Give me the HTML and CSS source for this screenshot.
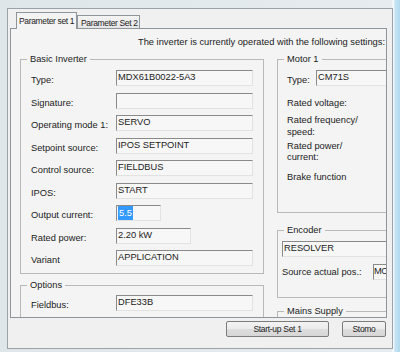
FILE: index.html
```html
<!DOCTYPE html>
<html>
  <head>
    <title>Parameter set</title>
    <link rel="stylesheet" href="styles.css">
  </head>
  <body>
    <div class="dialog">
      <div class="tabs">
        <div class="tab active">Parameter set 1</div>
        <div class="tab">Parameter Set 2</div>
      </div>
      <div class="panel">
        <p class="intro">The inverter is currently operated with the following settings:</p>
        <div class="cols">
          <div class="col-left">
            <fieldset class="group">
              <legend>Basic Inverter</legend>
              <div class="inner basic">
                <div class="row"><span class="lbl">Type:</span><span class="box">MDX61B0022-5A3</span></div>
                <div class="row"><span class="lbl">Signature:</span><span class="box"></span></div>
                <div class="row"><span class="lbl">Operating mode 1:</span><span class="box">SERVO</span></div>
                <div class="row"><span class="lbl">Setpoint source:</span><span class="box">IPOS SETPOINT</span></div>
                <div class="row"><span class="lbl">Control source:</span><span class="box">FIELDBUS</span></div>
                <div class="row"><span class="lbl">IPOS:</span><span class="box">START</span></div>
                <div class="row"><span class="lbl">Output current:</span><span class="box short"><span class="sel">5.5</span></span></div>
                <div class="row"><span class="lbl">Rated power:</span><span class="box mid">2.20 kW</span></div>
                <div class="row"><span class="lbl">Variant</span><span class="box">APPLICATION</span></div>
              </div>
            </fieldset>
            <fieldset class="group options">
              <legend>Options</legend>
              <div class="inner opts">
                <div class="row"><span class="lbl">Fieldbus:</span><span class="box">DFE33B</span></div>
              </div>
            </fieldset>
          </div>
          <div class="col-right">
            <fieldset class="group">
              <legend>Motor 1</legend>
              <div class="inner motor">
                <div class="row"><span class="lbl lbl-type">Type:</span><span class="box wide">CM71S</span></div>
                <div class="mline voltage">Rated voltage:</div>
                <div class="mline freq">Rated frequency/<br>speed:</div>
                <div class="mline power">Rated power/<br>current:</div>
                <div class="mline brake">Brake function</div>
              </div>
            </fieldset>
            <fieldset class="group encoder">
              <legend>Encoder</legend>
              <div class="inner enc">
                <span class="box wide">RESOLVER</span>
                <div class="row src"><span class="lbl lbl-src">Source actual pos.:</span><span class="box tiny">MO</span></div>
              </div>
            </fieldset>
            <fieldset class="group mains">
              <legend>Mains Supply</legend>
              <div class="inner mains-in"></div>
            </fieldset>
          </div>
        </div>
      </div>
      <div class="buttons">
        <button class="btn startup">Start-up Set 1</button>
        <button class="btn stomo">Stomo</button>
      </div>
    </div>
  </body>
</html>
```

FILE: styles.css
```css
body {
	margin: 0;
	width: 400px;
	height: 352px;
	overflow: hidden;
	background: linear-gradient(to right, #dfe6ea 0, #e6ecef 392px, #ffffff 393px, #c6e5f5 395px, #b2d8ee 400px);
	font-family: "Liberation Sans", Arial, sans-serif;
	font-size: 9.3px;
	color: #222;
}
.dialog {
	box-sizing: border-box;
	width: 386px;
	height: 341px;
	margin: 8px 0 0 7px;
	padding: 0 5px 0 2px;
	border: 1px solid #9aa3a9;
	background: #f0f0f0;
}
.tabs {
	display: flex;
	align-items: flex-end;
	height: 19px;
	padding-left: 6px;
}
.tab {
	box-sizing: border-box;
	height: 13px;
	width: 63px;
	padding: 1px 0 0 3px;
	border: 1px solid #8e959b;
	border-bottom: none;
	background: linear-gradient(#f4f4f4, #e6e6e6);
	font-size: 8.5px;
	letter-spacing: -0.35px;
	line-height: 12px;
	white-space: nowrap;
}
.tab.active {
	position: relative;
	z-index: 1;
	height: 17px;
	width: 61px;
	margin-bottom: -1px;
	padding: 2px 0 0 2px;
	background: #f4f4f4;
}
.panel {
	box-sizing: border-box;
	height: 290px;
	border: 1px solid #8e959b;
	background: #f4f4f4;
	overflow: hidden;
}
.intro {
	margin: 7px 0 0;
	padding-right: 1px;
	text-align: right;
	line-height: 12px;
	white-space: nowrap;
}
.cols {
	display: flex;
	margin-top: 5px;
	padding-left: 9px;
}
.col-left {
	width: 244px;
	flex-shrink: 0;
}
.col-right {
	width: 130px;
	margin-left: 13px;
	flex-shrink: 0;
}
.group {
	margin: 0;
	padding: 0;
	min-width: 0;
	border: 1px solid #b9b9b9;
}
.group legend {
	margin-left: 6px;
	padding: 0 3px;
	line-height: 12px;
}
.inner.basic {
	padding: 5px 0 7px 10px;
}
.options {
	margin-top: 5px;
}
.inner.opts {
	padding: 4px 0 20px 10px;
}
.row {
	display: flex;
	height: 16px;
	margin-bottom: 6.5px;
}
.row:last-child {
	margin-bottom: 0;
}
.lbl {
	width: 85px;
	flex-shrink: 0;
	padding-top: 4px;
	line-height: 12px;
	white-space: nowrap;
}
.box {
	display: block;
	box-sizing: border-box;
	width: 137px;
	height: 16px;
	padding: 0 1px;
	border: 1px solid;
	border-color: #8a8a8a #e2e2e2 #e2e2e2 #8a8a8a;
	background: #f7f7f7;
	line-height: 12px;
	white-space: nowrap;
	overflow: hidden;
	flex-shrink: 0;
}
.box.short {
	width: 45px;
}
.box.mid {
	width: 75px;
}
.box.wide {
	width: 110px;
}
.box.tiny {
	width: 14px;
	padding: 0;
	letter-spacing: -0.5px;
}
.sel {
	display: inline-block;
	height: 14px;
	padding: 0 1px;
	background: #3399ff;
	color: #fff;
	line-height: 14px;
}
.inner.motor {
	box-sizing: border-box;
	height: 147px;
	padding: 5px 0 0 9px;
}
.lbl-type {
	width: 29px;
}
.mline {
	line-height: 12px;
	white-space: nowrap;
}
.voltage {
	margin-top: 11px;
}
.freq {
	margin-top: 5px;
}
.power {
	margin-top: 3px;
	line-height: 11px;
}
.brake {
	margin-top: 8px;
}
.encoder {
	margin-top: 11px;
}
.inner.enc {
	padding: 5px 0 17px 4px;
}
.row.src {
	margin-top: 7px;
}
.lbl-src {
	width: 91px;
	padding-top: 2px;
}
.mains {
	margin-top: 7px;
}
.inner.mains-in {
	height: 20px;
}
.buttons {
	display: flex;
	justify-content: flex-end;
	gap: 13px;
	margin-top: 3px;
	padding-right: 1px;
}
.btn {
	box-sizing: border-box;
	height: 16px;
	padding: 0;
	border: 1px solid #7c7c7c;
	border-radius: 2px;
	background: linear-gradient(#f3f3f3, #ebebeb 50%, #dedede 50%, #d6d6d6);
	font-family: "Liberation Sans", Arial, sans-serif;
	font-size: 8.5px;
	letter-spacing: -0.3px;
	line-height: 14px;
	color: #222;
}
.startup {
	width: 103px;
}
.stomo {
	width: 44px;
}
```
